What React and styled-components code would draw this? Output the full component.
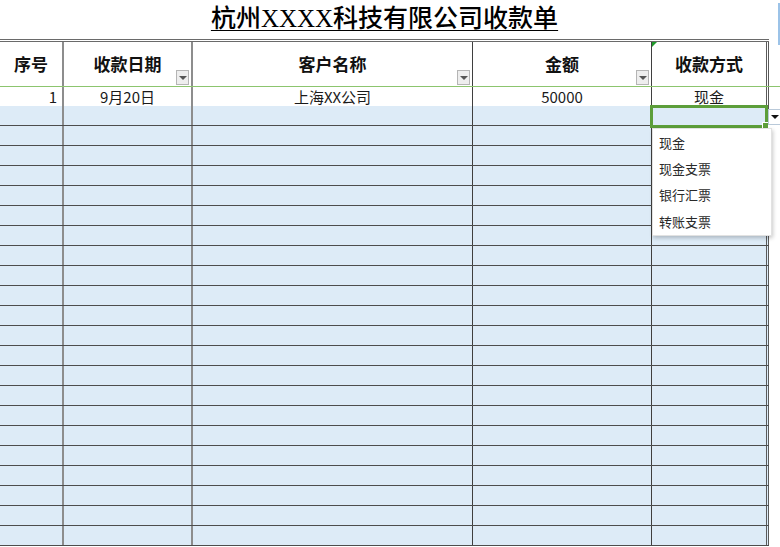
import React from 'react';
import styled, { createGlobalStyle } from 'styled-components';

const GlobalStyle = createGlobalStyle`
  html, body {
    margin: 0;
    padding: 0;
    background: #ffffff;
  }
  body {
    font-family: "Noto Sans CJK SC", "Noto Sans", sans-serif;
    color: #111;
  }
`;

const COLS = '64px 129px 280px 179px 117px';

const columns = [
  { key: 'no', label: '序号', line: 'light' },
  { key: 'date', label: '收款日期', line: 'light', filter: true },
  { key: 'client', label: '客户名称', line: 'dark', filter: true },
  { key: 'amount', label: '金额', line: 'dark', filter: true },
  { key: 'method', label: '收款方式', line: 'none' },
];

const firstRow = [
  { text: '1', align: 'right' },
  { text: '9月20日' },
  { text: '上海XX公司' },
  { text: '50000' },
  { text: '现金' },
];

const options = ['现金', '现金支票', '银行汇票', '转账支票'];

const Page = styled.div`
  position: relative;
  width: 780px;
  height: 547px;
  overflow: hidden;
  background: #fff;
`;

const TitleBar = styled.div`
  height: 39px;
  width: 769px;
  display: flex;
  justify-content: center;
  align-items: flex-start;
`;

const Title = styled.h1`
  margin: 4px 0 0 0;
  font-family: "Liberation Serif", "Noto Sans CJK SC", serif;
  font-size: 25px;
  font-weight: 500;
  line-height: 30px;
  text-decoration: underline;
  text-underline-offset: 3px;
  text-decoration-thickness: 1px;
  color: #000;
`;

const Row = styled.div`
  display: grid;
  grid-template-columns: ${COLS};
  width: 769px;
  height: ${({ $h }) => $h}px;
  box-sizing: border-box;
  background: ${({ $blue }) => ($blue ? '#ddebf7' : '#fff')};
  border-top: ${({ $top }) => ($top ? '3px double #6a6a6a' : 'none')};
  border-bottom: ${({ $line }) => ($line ? '1px solid #4d4d4d' : 'none')};
`;

const lineColor = {
  light: '2px solid #8d8d8d',
  dark: '1px solid #3f3f3f',
  none: '3px double #5a5a5a',
};

const Cell = styled.div`
  position: relative;
  box-sizing: border-box;
  border-right: ${({ $line }) => lineColor[$line]};
  display: flex;
  align-items: center;
  justify-content: ${({ $align }) => ($align === 'right' ? 'flex-end' : 'center')};
  padding-right: ${({ $align }) => ($align === 'right' ? '5px' : '0')};
  font-size: 15px;
  line-height: 19px;
  color: #1a1a1a;
`;

const HeadCell = styled(Cell)`
  font-size: 17px;
  font-weight: 700;
  color: #111;
  padding-bottom: 1px;
`;

const FilterButton = styled.span`
  position: absolute;
  right: 2px;
  bottom: 1px;
  width: 13px;
  height: 15px;
  box-sizing: border-box;
  border: 1px solid #b5b5b5;
  background: #eeeeee;
  display: flex;
  align-items: center;
  justify-content: center;

  &::after {
    content: '';
    border-left: 4px solid transparent;
    border-right: 4px solid transparent;
    border-top: 4px solid #555;
  }
`;

const CommentMark = styled.span`
  position: absolute;
  left: 0;
  top: 0;
  width: 0;
  height: 0;
  border-top: 5px solid #1e9a2a;
  border-right: 5px solid transparent;
`;

const FreezeLine = styled.div`
  width: 780px;
  height: 1px;
  background: #8cc56e;
`;

const SelectedCell = styled.div`
  position: absolute;
  left: 650px;
  top: 105px;
  width: 118px;
  height: 23px;
  box-sizing: border-box;
  border: 3px solid #5c9e3a;

  &::after {
    content: '';
    position: absolute;
    right: -4px;
    bottom: -4px;
    width: 5px;
    height: 5px;
    background: #5c9e3a;
    border: 1px solid #fff;
  }
`;

const ListArrow = styled.div`
  position: absolute;
  left: 768px;
  top: 109px;
  width: 13px;
  height: 16px;
  box-sizing: border-box;
  background: #fff;
  border: 1px solid #b9c9d9;
  display: flex;
  align-items: center;
  justify-content: center;

  &::after {
    content: '';
    border-left: 4px solid transparent;
    border-right: 4px solid transparent;
    border-top: 4px solid #111;
  }
`;

const Dropdown = styled.ul`
  position: absolute;
  left: 652px;
  top: 128px;
  width: 118px;
  margin: 0;
  padding: 0;
  list-style: none;
  background: #fff;
  border: 1px solid #e2e2e2;
  box-shadow: 1px 2px 4px rgba(0, 0, 0, 0.22);
`;

const Option = styled.li`
  height: 26.4px;
  display: flex;
  align-items: center;
  padding-left: 6px;
  font-size: 13px;
  color: #2a2a2a;
`;

const PaneEdge = styled.div`
  position: absolute;
  left: 778px;
  top: 3px;
  width: 2px;
  height: 42px;
  background: #9cc3e8;
`;

const App = () => {
  const blueRows = Array.from({ length: 22 }, (_, i) => i);
  return (
    <Page>
      <GlobalStyle />
      <TitleBar>
        <Title>杭州XXXX科技有限公司收款单</Title>
      </TitleBar>
      <Row $h={47} $top>
        {columns.map((c, i) => (
          <HeadCell key={c.key} $line={c.line}>
            {i === 4 && <CommentMark />}
            {c.label}
            {c.filter && <FilterButton />}
          </HeadCell>
        ))}
      </Row>
      <FreezeLine />
      <Row $h={19}>
        {firstRow.map((v, i) => (
          <Cell key={i} $line={columns[i].line} $align={v.align}>
            {v.text}
          </Cell>
        ))}
      </Row>
      {blueRows.map((r) => (
        <Row key={r} $h={20} $blue $line>
          {columns.map((c) => (
            <Cell key={c.key} $line={c.line} />
          ))}
        </Row>
      ))}
      <PaneEdge />
      <SelectedCell />
      <ListArrow />
      <Dropdown>
        {options.map((o) => (
          <Option key={o}>{o}</Option>
        ))}
      </Dropdown>
    </Page>
  );
};

export default App;
